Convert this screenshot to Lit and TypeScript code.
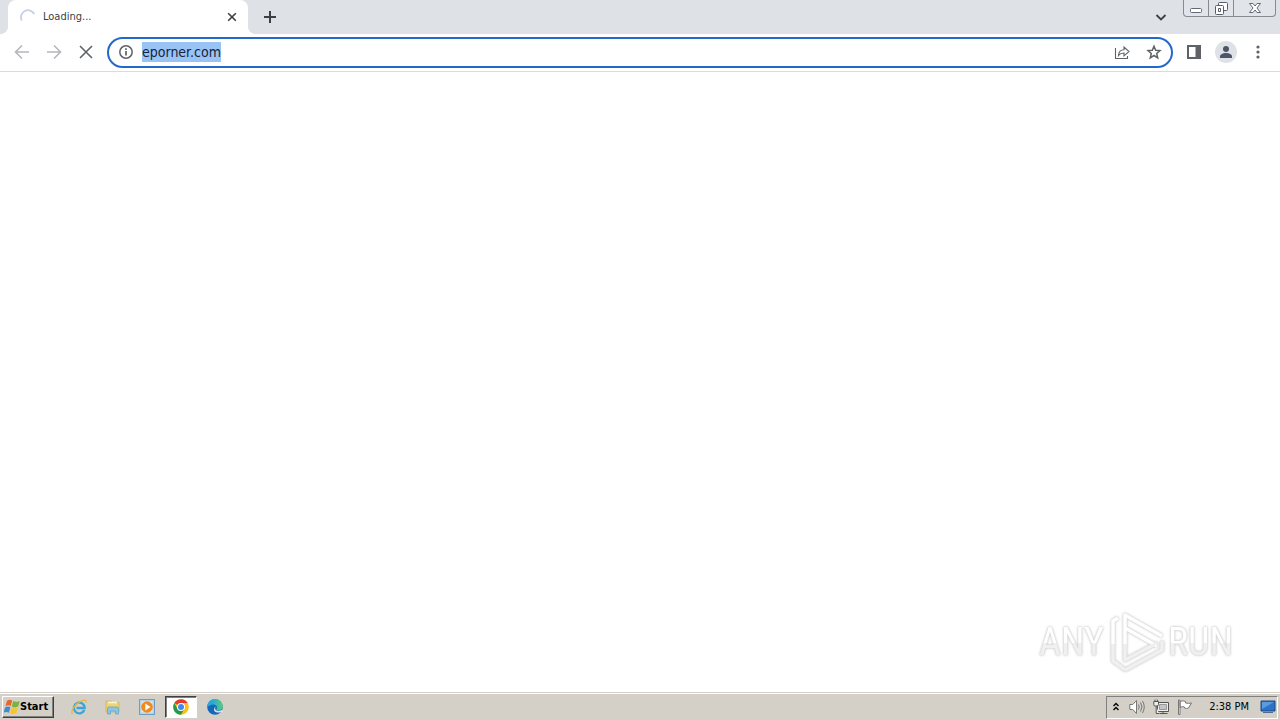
import { LitElement, html, css, svg } from "lit";
import { customElement, query } from "lit/decorators.js";

@customElement("tab-strip")
class TabStrip extends LitElement {
  static styles = css`
    :host { display: flex; height: 34px; padding-left: 8px; background: #dee1e6; font: 11px/16px Tahoma, "DejaVu Sans Condensed", sans-serif; color: #3c4043; }
    button { border: 0; padding: 0; background: none; display: grid; place-items: center; color: #3c4043; }
    svg { display: block; }
    .tab { position: relative; box-sizing: border-box; width: 240px; display: flex; align-items: center; padding: 0 8px 0 12px; gap: 7px; background: #fff; border-radius: 8px 8px 0 0; }
    .tab::before, .tab::after { content: ""; position: absolute; bottom: 0; width: 8px; height: 8px; }
    .tab::before { left: -8px; background: radial-gradient(circle at 0 0, transparent 8px, #fff 8px); }
    .tab::after { right: -8px; background: radial-gradient(circle at 100% 0, transparent 8px, #fff 8px); }
    .title { flex: 1; }
    .close { width: 16px; height: 16px; }
    .add { width: 28px; height: 34px; margin-left: 8px; }
    .space { flex: 1; }
    .search { width: 28px; height: 34px; margin-right: 8px; }
    .frame { display: flex; box-sizing: border-box; width: 93px; height: 17px; margin-right: 4px; border: 1px solid #858a93; border-top: 0; border-radius: 0 0 4px 4px; background: #e1e4e9; }
    .frame button { flex: 1; border-right: 1px solid #858a93; }
    .frame button:last-child { flex: 0 0 41px; border: 0; }
  `;
  render() {
    return html`
      <div class="tab">
        <svg width="16" height="16" viewBox="0 0 16 16" fill="none" stroke="#c5d0e6" stroke-width="1.800"><path d="M1.800 11.500A7 7 0 0 1 14.300 5"/></svg>
        <span class="title">Loading...</span>
        <button class="close" aria-label="Close tab"><svg width="16" height="16" viewBox="0 0 16 16" stroke="currentColor" stroke-width="1.600"><path d="M4.200 4.200l7.600 7.600M11.800 4.200l-7.600 7.600"/></svg></button>
      </div>
      <button class="add" aria-label="New tab"><svg width="14" height="14" viewBox="0 0 14 14" stroke="currentColor" stroke-width="2"><path d="M7 1v12M1 7h12"/></svg></button>
      <div class="space"></div>
      <button class="search" aria-label="Search tabs"><svg width="12" height="12" viewBox="0 0 12 12" fill="none" stroke="currentColor" stroke-width="1.800"><path d="M1.500 4L6 8.500 10.500 4"/></svg></button>
      <div class="frame">
        <button aria-label="Minimize"><svg width="14" height="16" viewBox="0 0 14 16"><rect x="1.500" y="8.500" width="11" height="4" rx="1" fill="#fff" stroke="#626977"/></svg></button>
        <button aria-label="Restore"><svg width="14" height="16" viewBox="0 0 14 16" fill="#fff" stroke="#555d6b"><rect x="4.500" y="2.500" width="9" height="8" rx="1"/><rect x="1.500" y="5.500" width="8" height="9" rx="1"/><path d="M4.500 8.500h2v3h-2z"/></svg></button>
        <button aria-label="Close"><svg width="14" height="16" viewBox="0 0 14 16"><path d="M1.500 3.500h3.500l2 2.500 2-2.500h3.500L9 8l3.500 4.500H9L7 10l-2 2.500H1.500L5 8z" fill="#fff" stroke="#626977"/></svg></button>
      </div>`;
  }
}

@customElement("browser-toolbar")
class BrowserToolbar extends LitElement {
  static styles = css`
    :host { display: flex; align-items: flex-start; box-sizing: border-box; height: 38px; padding: 3px 8px 0; border-bottom: 1px solid #d9dbdf; background: #fff; }
    button { border: 0; padding: 0; width: 28px; height: 30px; background: none; display: grid; place-items: center; color: #5f6368; }
    svg { display: block; }
    .nav { display: flex; gap: 4px; }
    .nav button:disabled { color: #b5b7ba; }
    .omnibox { flex: 1; display: flex; align-items: center; box-sizing: border-box; height: 31px; margin: 0 7px; padding: 0 3px 1px 9px; border: 2px solid #2369cc; border-radius: 16px; }
    .info { width: 16px; margin-right: 8px; }
    input { flex: 1; min-width: 0; border: 0; padding: 0; outline: 0; background: none; height: 20px; font: 14px/20px Tahoma, "DejaVu Sans Condensed", sans-serif; color: #202124; }
    input::selection { background: #9ac3f5; color: #15243a; }
    .end { display: flex; gap: 4px; }
  `;
  @query("input") address!: HTMLInputElement;
  firstUpdated() {
    this.address.focus();
    this.address.select();
  }
  render() {
    return html`
      <div class="nav">
        <button disabled aria-label="Back"><svg width="16" height="16" viewBox="0 0 16 16" fill="none" stroke="currentColor" stroke-width="1.600"><path d="M15 8H2M8 1.500L1.500 8 8 14.500"/></svg></button>
        <button disabled aria-label="Forward"><svg width="16" height="16" viewBox="0 0 16 16" fill="none" stroke="currentColor" stroke-width="1.600"><path d="M1 8h13M8 1.500L14.500 8 8 14.500"/></svg></button>
        <button aria-label="Stop"><svg width="16" height="16" viewBox="0 0 16 16" stroke="currentColor" stroke-width="1.600"><path d="M2 2l12 12M14 2L2 14"/></svg></button>
      </div>
      <div class="omnibox">
        <button class="info" aria-label="Site information"><svg width="16" height="16" viewBox="0 0 16 16" fill="none" stroke="currentColor"><circle cx="8" cy="8" r="6.200" stroke-width="1.500"/><path d="M8 7v4.500M8 4.200v1.800" stroke-width="1.700"/></svg></button>
        <input type="text" aria-label="Address" spellcheck="false" value="eporner.com">
        <div class="end">
          <button aria-label="Share"><svg width="16" height="16" viewBox="0 0 16 16" fill="none" stroke="currentColor" stroke-width="1.100"><path d="M1.500 4v10.500h12V12M4.500 11.500c.3-4 2.300-5.700 5.500-5.700V3l5 4.500-5 4.300V9c-2.500 0-4.200.7-5.500 2.500z"/></svg></button>
          <button aria-label="Bookmark"><svg width="16" height="16" viewBox="0 0 16 16" fill="none" stroke="currentColor" stroke-width="1.500"><path d="M8 2.200l1.700 4 4.300.4-3.300 2.900 1 4.300L8 11.500l-3.700 2.300 1-4.300L2 6.600l4.300-.4z"/></svg></button>
        </div>
      </div>
      <div class="end">
        <button aria-label="Side panel"><svg width="14" height="14" viewBox="0 0 14 14"><rect x="1" y="1" width="12" height="12" fill="none" stroke="currentColor" stroke-width="2"/><path d="M8.500 1h5v12h-5z" fill="currentColor"/></svg></button>
        <button aria-label="Profile"><svg width="22" height="22" viewBox="0 0 22 22"><circle cx="11" cy="11" r="11" fill="#dee1e6"/><g fill="#4b5468"><circle cx="11" cy="8" r="3"/><path d="M5 17v-1.500c0-2.300 3-3.500 6-3.500s6 1.200 6 3.500V17z"/></g></svg></button>
        <button aria-label="Menu"><svg width="16" height="16" viewBox="0 0 16 16" fill="currentColor"><circle cx="8" cy="3" r="1.600"/><circle cx="8" cy="8" r="1.600"/><circle cx="8" cy="13" r="1.600"/></svg></button>
      </div>`;
  }
}

const apps = [
  { name: "Internet Explorer", active: false, icon: svg`<path d="M13.300 11A5.400 5.400 0 1 1 13.700 9H5.500" fill="none" stroke="#3aa5dd" stroke-width="2.300"/><path d="M1.500 15C-1 12 5 4 11 1.600c3-1 4.500-.3 4 2" fill="none" stroke="#e4b83c" stroke-width="1.300"/>` },
  { name: "Explorer", active: false, icon: svg`<path d="M1 2h5l1 1.500h7V13H1z" fill="#edd477" stroke="#c9a94a" stroke-width=".6"/><path d="M3 3.500h9" stroke="#fff6c9" stroke-width="1.500"/><path d="M2.500 15V9.500q0-1.500 1.500-1.500h8q1.500 0 1.500 1.500V15h-3v-3h-5v3z" fill="#8bc5e6" stroke="#5a9fc9" stroke-width=".7"/>` },
  { name: "Media Player", active: false, icon: svg`<rect x=".5" y=".5" width="15" height="15" fill="#b7d3ea" stroke="#6e9cc6"/><path d="M2.500 2.500h11v11h-11z" fill="#dceaf5"/><circle cx="8" cy="8" r="5.800" fill="#f18a1d"/><path d="M6.300 4.500v7L11.500 8z" fill="#fff"/>` },
  { name: "Chrome", active: true, icon: svg`<circle cx="8" cy="8" r="7.800" fill="#fbc116"/><path d="M8 8L1.250 4.100A7.800 7.800 0 0 1 14.750 4.100H8z" fill="#e33b2e"/><path d="M1.250 4.100A7.800 7.800 0 0 0 8 15.800L11.400 10 8 8 4.600 10z" fill="#249a4c"/><circle cx="8" cy="8" r="4" fill="#fff"/><circle cx="8" cy="8" r="3" fill="#4285f4"/>` },
  { name: "Edge", active: false, icon: svg`<defs><linearGradient id="edge"><stop offset=".3" stop-color="#25a7df"/><stop offset="1" stop-color="#59cf70"/></linearGradient></defs><circle cx="8" cy="8" r="7.800" fill="#1269b8"/><path d="M.2 8A7.800 7.800 0 0 1 15.800 7.500c0 2.500-2 3.800-4 3.800-1.800 0-2.700-.8-2.300-1.500C11 7.500 9 5.400 6.500 5.400 3.500 5.400 1.200 7 .2 8z" fill="url(#edge)"/><path d="M9 7.500c-2 2-.5 4.300 2.500 4.300 1.500 0 2.800-.4 3.800-1.100L16 13l-2 .2c-2.800 1-6.500.2-7-2.200-.2-1.500.8-3 2-3.500z" fill="#e2e0dc"/>` },
];

@customElement("task-bar")
class TaskBar extends LitElement {
  static styles = css`
    :host { display: flex; align-items: center; box-sizing: border-box; height: 28px; padding: 3px 2px 1px; background: #d4d0c8; box-shadow: inset 0 1px #d4d0c8, inset 0 2px #fff; font: 11px/16px Tahoma, "DejaVu Sans Condensed", sans-serif; color: #000; }
    button { border: 0; padding: 0; background: none; display: grid; place-items: center; color: inherit; font: inherit; }
    svg { display: block; }
    .start { display: flex; align-items: center; box-sizing: border-box; width: 52px; height: 22px; padding-left: 1px; border: 1px solid; border-color: #fff #404040 #404040 #fff; box-shadow: inset -1px -1px #808080; font-weight: bold; }
    .apps { display: flex; flex: 1; gap: 2px; margin-left: 9px; }
    .app { box-sizing: border-box; width: 32px; height: 22px; border: 1px solid transparent; }
    .active { background: #fff; border-color: #404040 #fff #fff #404040; box-shadow: inset 1px 1px #808080; }
    .tray { display: flex; align-items: center; box-sizing: border-box; height: 23px; padding: 0 1px 0 4px; border: 1px solid; border-color: #808080 #fff #fff #808080; }
    .tray button { width: 24px; height: 20px; }
    .tray .expand { width: 10px; margin-right: 4px; }
    .tray .desktop { width: 16px; }
    .clock { padding: 0 11px 0 12px; white-space: nowrap; }
  `;
  render() {
    return html`
      <button class="start"><svg width="16" height="16" viewBox="0 0 16 16"><path d="M3 1.800q2.500-1.800 5.200-.3L6.700 7Q4 5.500 1.400 7.300z" fill="#e8652d"/><path d="M9.200 2q2.800 1.700 6.600-.1L14.200 7.600q-3.200 1.700-6.500-.1z" fill="#79b340"/><path d="M1.100 8.400q2.800-1.700 5.300-.2L4.900 13.800Q2.500 12.300-.4 13.700z" fill="#3f8bd0"/><path d="M7.400 8.600q2.900 1.600 6.500.1l-1.500 5.400q-3.300 1.600-6.500-.1z" fill="#f4c431"/></svg>Start</button>
      <div class="apps">${apps.map((a) => html`<button class="app ${a.active ? "active" : ""}" aria-label=${a.name}><svg width="16" height="16" viewBox="0 0 16 16">${a.icon}</svg></button>`)}</div>
      <div class="tray">
        <button class="expand" aria-label="Show hidden icons"><svg width="8" height="10" viewBox="0 0 8 10" fill="none" stroke="#000" stroke-width="1.400"><path d="M1.500 4L4 1.500 6.500 4M1.500 8L4 5.500 6.500 8"/></svg></button>
        <button aria-label="Volume"><svg width="16" height="16" viewBox="0 0 16 16" fill="none" stroke="#777"><path d="M.8 5.500h3L7.500 1.500v13l-3.700-4h-3z" fill="#fff"/><path d="M9.500 5.500q1.500 2.500 0 5M11.500 3.500q3 4.500 0 9M13.500 2q3.500 6 0 12"/></svg></button>
        <button aria-label="Network"><svg width="16" height="16" viewBox="0 0 16 16" fill="#eee" stroke="#555"><path d="M4.500 3.500h11v9h-11z"/><path d="M6.500 5.500h7v5h-7z" fill="#c4c4c4" stroke="#999"/><path d="M10 12.500v2M6.500 14.500h8" /><path d="M.8 2.500h4.700v3q0 1.500-1.500 1.500H2.300Q.8 7 .8 5.500zM2 .5v2M4.300.5v2M3.200 7v7.500H6"/></svg></button>
        <button aria-label="Action Center"><svg width="16" height="16" viewBox="0 0 16 16" fill="#fff" stroke="#777"><path d="M1.500 1v14.500h1.500V1zM3 2.500q3-1.500 5.500 0v1.500q3 .7 6 0-1.500 2.500-3 5-2 1-4 0V8Q5.500 7 3 8.500z"/></svg></button>
        <span class="clock">2:38 PM</span>
        <button class="desktop" aria-label="Show desktop"><svg width="16" height="14" viewBox="0 0 16 14"><path d="M1 1h14v10H1z" fill="#2e72c8" stroke="#194789"/><path d="M2 2h12L2 9z" fill="#5c9ae0"/><path d="M3 12.500h10" stroke="#516b8e"/></svg></button>
      </div>`;
  }
}

@customElement("app-root")
class AppRoot extends LitElement {
  static styles = css`
    :host { display: flex; flex-direction: column; height: 100vh; background: #fff; overflow: hidden; }
    main { position: relative; flex: 1; }
    .mark { position: absolute; right: 47px; bottom: 18px; display: flex; align-items: center; gap: 4px; font: 38px/64px "Liberation Sans Narrow", "Roboto Condensed", "Liberation Sans", sans-serif; color: #fff; filter: drop-shadow(0 0 1px #ccc) drop-shadow(0 0 1px #ddd); }
    .mark svg { display: block; }
    .word { background: linear-gradient(#fff 52%, #f0f0f0 52%); background-clip: text; -webkit-background-clip: text; color: transparent; }
  `;
  render() {
    return html`
      <tab-strip></tab-strip>
      <browser-toolbar></browser-toolbar>
      <main>
        <div class="mark">
          <span class="word">ANY</span>
          <svg width="56" height="64" viewBox="0 0 56 64" fill="none" stroke-linejoin="round"><path d="M5 34V11l5-3M17 34V5l37 21M17 18l32 18" stroke="#fff" stroke-width="3.500"/><path d="M5 34v17l6 4M17 34v16l32-17M17 60l37-20V31M11 55l6 5" stroke="#f0f0f0" stroke-width="3.500"/></svg>
          <span class="word">RUN</span>
        </div>
      </main>
      <task-bar></task-bar>`;
  }
}
